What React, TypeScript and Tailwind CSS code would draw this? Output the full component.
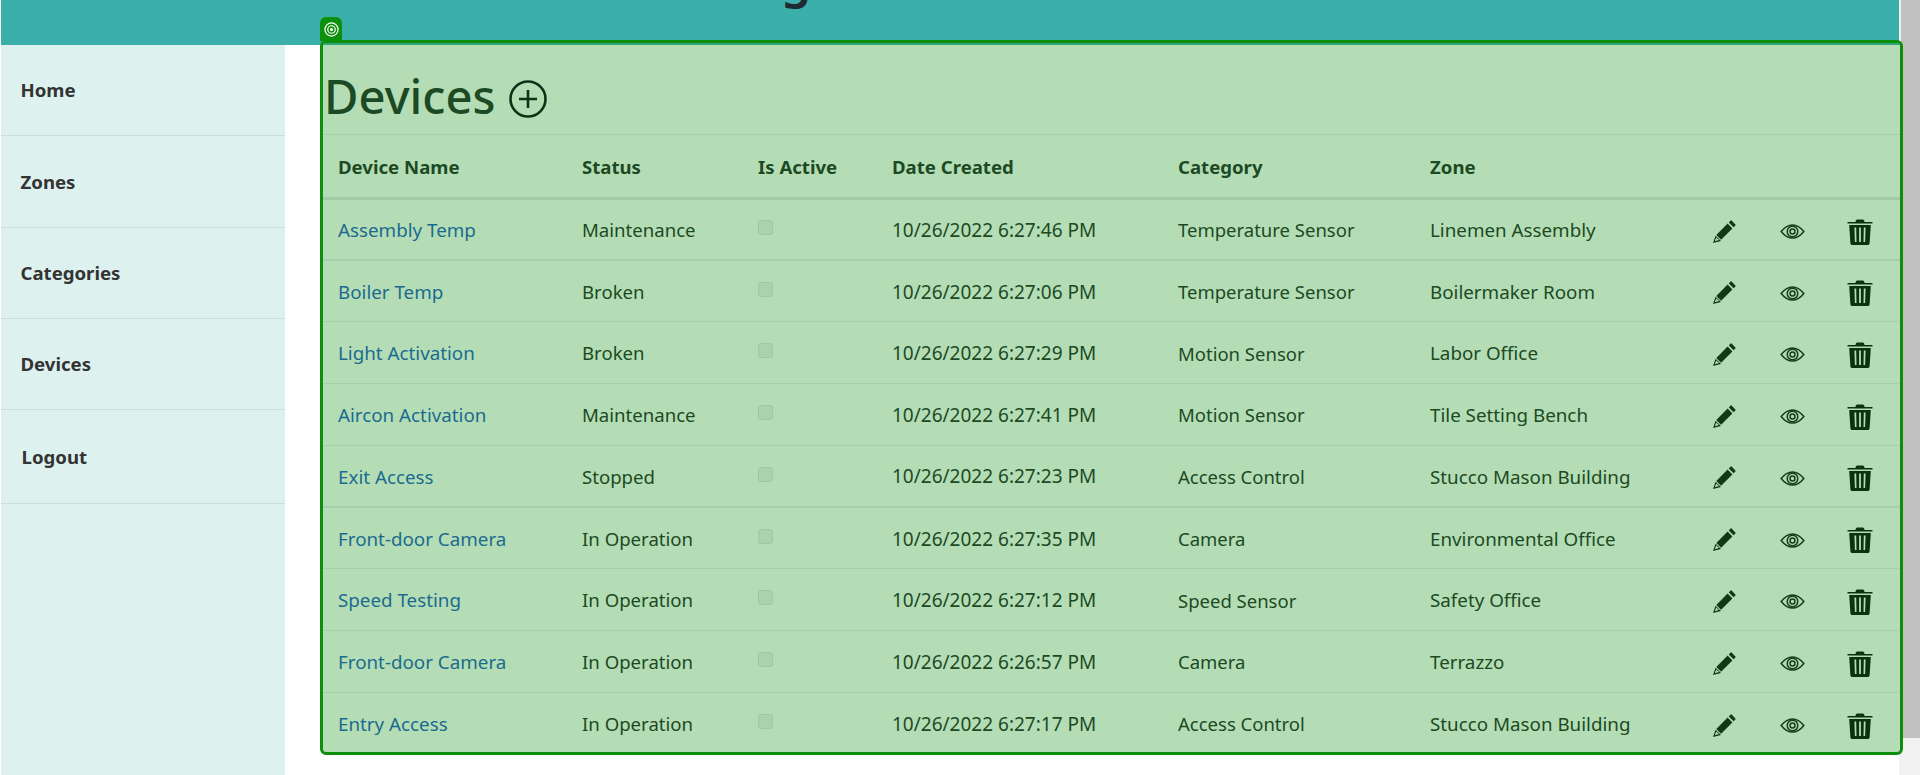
import React from 'react';

const devices = [
  ['Assembly Temp', 'Maintenance', '10/26/2022 6:27:46 PM', 'Temperature Sensor', 'Linemen Assembly'],
  ['Boiler Temp', 'Broken', '10/26/2022 6:27:06 PM', 'Temperature Sensor', 'Boilermaker Room'],
  ['Light Activation', 'Broken', '10/26/2022 6:27:29 PM', 'Motion Sensor', 'Labor Office'],
  ['Aircon Activation', 'Maintenance', '10/26/2022 6:27:41 PM', 'Motion Sensor', 'Tile Setting Bench'],
  ['Exit Access', 'Stopped', '10/26/2022 6:27:23 PM', 'Access Control', 'Stucco Mason Building'],
  ['Front-door Camera', 'In Operation', '10/26/2022 6:27:35 PM', 'Camera', 'Environmental Office'],
  ['Speed Testing', 'In Operation', '10/26/2022 6:27:12 PM', 'Speed Sensor', 'Safety Office'],
  ['Front-door Camera', 'In Operation', '10/26/2022 6:26:57 PM', 'Camera', 'Terrazzo'],
  ['Entry Access', 'In Operation', '10/26/2022 6:27:17 PM', 'Access Control', 'Stucco Mason Building'],
];

const navItems = ['Home', 'Zones', 'Categories', 'Devices'];

function PencilIcon() {
  return (
    <svg viewBox="0 0 24 24" className="w-[24px] h-[24px]" fill="#0f3a14">
      <path d="M4.3 14.9 L15.6 3.6 L20.4 8.4 L9.1 19.7 Z" />
      <path d="M16.8 2.4 L18.6 0.6 Q19.1 0.1 19.6 0.6 L23.4 4.4 Q23.9 4.9 23.4 5.4 L21.6 7.2 Z" />
      <path d="M1 23 L3.6 15.8 L9 21 Z M2.8 21.2 L7 19.9 L4.2 17.4 Z" fillRule="evenodd" />
    </svg>
  );
}

function EyeIcon() {
  return (
    <svg viewBox="0 0 26 18" className="w-[25px] h-[17px]" fill="none" stroke="#143f1a" strokeWidth="1.6">
      <path d="M1 9 C5 4 9 2 13 2 C17 2 21 4 25 9 C21 14 17 16 13 16 C9 16 5 14 1 9 Z" />
      <circle cx="13" cy="9" r="5.6" />
      <circle cx="13" cy="9" r="2.6" />
    </svg>
  );
}

function TrashIcon() {
  return (
    <svg viewBox="0 0 26 26" className="w-[26px] h-[26px]" fill="#0b330f">
      <path d="M8.5 3 C8.5 1.2 9.6 0.6 11 0.6 H15 C16.4 0.6 17.5 1.2 17.5 3 H25.5 V4.6 H0.5 V3 Z" />
      <path
        fillRule="evenodd"
        d="M2.2 6 H23.8 L22.6 24.2 C22.5 25.4 21.8 26 20.8 26 H5.2 C4.2 26 3.5 25.4 3.4 24.2 Z M7.4 8.5 L7.9 23 H9.5 L9.2 8.5 Z M12.1 8.5 V23 H13.9 V8.5 Z M16.8 8.5 L16.5 23 H18.1 L18.6 8.5 Z"
      />
    </svg>
  );
}

export default function App() {
  return (
    <div className="relative h-[775px] overflow-hidden bg-white font-['Noto_Sans',sans-serif] text-[18.6px]">
      <header className="h-[45px] ml-px mr-[21px] bg-[#3bafa9] relative overflow-hidden">
        <span className="absolute left-[482px] -top-[57px] text-[48px] font-semibold whitespace-nowrap text-[#1f2a33]">Device Manager</span>
      </header>

      <div className="flex items-start">
        <nav className="ml-px w-[284px] h-[730px] bg-[#ddf2ef] shrink-0 text-[#333] font-bold">
          {navItems.map((item) => (
            <div key={item} className="h-[91.3px] flex items-center pl-[19.5px] border-b border-[#c8dedc]">
              {item}
            </div>
          ))}
          <div className="h-[94px] flex items-center pl-[20.5px] pt-px border-b border-[#c8dedc]">Logout</div>
        </nav>

        <main className="relative z-10 ml-[35px] -mt-[5px] w-[1583px] h-[715px] shrink-0 border-[3px] border-[#0c900c] rounded-[6px] bg-[#b4ddb5]">
          <div className="absolute -left-[3px] -top-[26px] w-[22px] h-[24px] bg-[#0c900c] rounded-t-[6px] flex items-center justify-center">
            <svg viewBox="0 0 16 16" className="w-[15px] h-[15px]" fill="none" stroke="#fff" strokeWidth="1.3">
              <circle cx="8" cy="8" r="7" />
              <circle cx="8" cy="8" r="4" />
              <circle cx="8" cy="8" r="1" fill="#fff" />
            </svg>
          </div>

          <div className="absolute top-0 inset-x-0 h-[2px] bg-[#2fa57a] rounded-t-[3px]" />

          <h1 className="h-[92px] pt-[17px] pl-[1px] flex items-center gap-[14px] text-[47.2px] leading-none font-medium text-[#1c4a24] border-b border-[#a4cfa8]">
            Devices
            <svg viewBox="0 0 38 38" className="w-[38px] h-[38px] mt-[3px]" fill="none" stroke="#0f3318" strokeWidth="2.6">
              <circle cx="19" cy="19" r="17.5" />
              <path d="M19 10 V28 M10 19 H28" />
            </svg>
          </h1>

          <table className="w-full table-fixed border-collapse text-[#1c4a24]">
            <colgroup>
              <col className="w-[244px]" />
              <col className="w-[176px]" />
              <col className="w-[134px]" />
              <col className="w-[286px]" />
              <col className="w-[252px]" />
              <col className="w-[282px]" />
              <col className="w-[67px]" />
              <col className="w-[67px]" />
              <col />
            </colgroup>
            <thead>
              <tr className="h-[63px] border-b-[3px] border-[#a0cca8] font-bold">
                {['Device Name', 'Status', 'Is Active', 'Date Created', 'Category', 'Zone', '', '', ''].map((h, i) => (
                  <th key={i} className="pl-[15px] pt-[2px] text-left font-bold">{h}</th>
                ))}
              </tr>
            </thead>
            <tbody>
              {devices.map((d, i) => (
                <tr key={i} className={`h-[61.75px] border-[#a6d0ac] last:border-b-0 ${i === 0 || i === 4 ? 'border-b-2' : 'border-b'}`}>
                  <td className="pl-[15px] pt-[2px] text-[#1b6b8f] text-[18.8px] whitespace-nowrap">{d[0]}</td>
                  <td className="pl-[15px] pt-[2px] whitespace-nowrap">{d[1]}</td>
                  <td className="pl-[15px]">
                    <div className="-mt-[3px] w-[15px] h-[15px] rounded-[3px] border-[1.5px] border-[#9dc9a0] bg-[#abd3ab]" />
                  </td>
                  <td className="pl-[15px] pt-[2px] whitespace-nowrap text-[19px]">{d[2]}</td>
                  <td className="pl-[15px] pt-[2px] text-[18.5px] whitespace-nowrap">{d[3]}</td>
                  <td className="pl-[15px] pt-[2px] text-[18.8px] whitespace-nowrap">{d[4]}</td>
                  <td className="pl-[15px] pt-[5px]"><PencilIcon /></td>
                  <td className="pl-[16px] pt-[5px]"><EyeIcon /></td>
                  <td className="pl-[16px] pt-[5px]"><TrashIcon /></td>
                </tr>
              ))}
            </tbody>
          </table>
        </main>
      </div>

      <div className="absolute top-0 right-0 bottom-0 w-[21px] bg-[#f1f1f1]">
        <div className="h-[738px] ml-[2px] bg-[#c1c1c1]" />
      </div>
    </div>
  );
}
